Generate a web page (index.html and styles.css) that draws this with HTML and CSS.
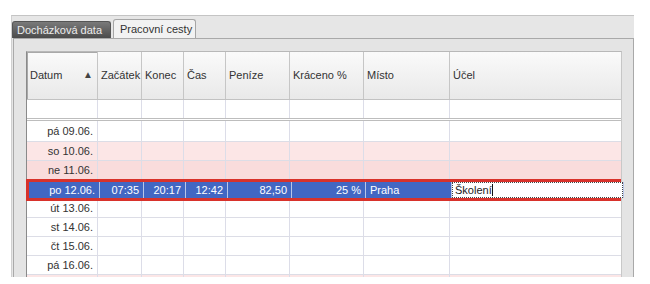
FILE: index.html
```html
<!DOCTYPE html>
<html lang="cs">
<head>
    <meta charset="UTF-8">
    <title>Pracovní cesty</title>
    <link rel="stylesheet" href="styles.css">
</head>
<body>

    <div class="window">
        <!-- Tabs -->
        <div class="tabs">
            <div class="tab">Docházková data</div>
            <div class="tab active">Pracovní cesty</div>
        </div>

        <!-- Panel with grid -->
        <div class="panel">
            <div class="grid">
                <div class="row head">
                    <div class="cell">Datum <span class="sort">▲</span></div>
                    <div class="cell">Začátek</div>
                    <div class="cell">Konec</div>
                    <div class="cell">Čas</div>
                    <div class="cell">Peníze</div>
                    <div class="cell">Kráceno %</div>
                    <div class="cell">Místo</div>
                    <div class="cell">Účel</div>
                </div>
                <div class="row filter">
                    <div class="cell"></div><div class="cell"></div><div class="cell"></div><div class="cell"></div>
                    <div class="cell"></div><div class="cell"></div><div class="cell"></div><div class="cell"></div>
                </div>

                <div class="rows">
                    <div class="row first">
                        <div class="cell num">pá 09.06.</div><div class="cell"></div><div class="cell"></div><div class="cell"></div>
                        <div class="cell"></div><div class="cell"></div><div class="cell"></div><div class="cell"></div>
                    </div>
                    <div class="row sat">
                        <div class="cell num">so 10.06.</div><div class="cell"></div><div class="cell"></div><div class="cell"></div>
                        <div class="cell"></div><div class="cell"></div><div class="cell"></div><div class="cell"></div>
                    </div>
                    <div class="row sun">
                        <div class="cell num">ne 11.06.</div><div class="cell"></div><div class="cell"></div><div class="cell"></div>
                        <div class="cell"></div><div class="cell"></div><div class="cell"></div><div class="cell"></div>
                    </div>
                    <div class="row selected">
                        <div class="cell num">po 12.06.</div>
                        <div class="cell num">07:35</div>
                        <div class="cell num">20:17</div>
                        <div class="cell num">12:42</div>
                        <div class="cell num">82,50</div>
                        <div class="cell num">25 %</div>
                        <div class="cell">Praha</div>
                        <div class="cell edit"><span class="input">Školení<i class="caret"></i></span></div>
                    </div>
                    <div class="row">
                        <div class="cell num">út 13.06.</div><div class="cell"></div><div class="cell"></div><div class="cell"></div>
                        <div class="cell"></div><div class="cell"></div><div class="cell"></div><div class="cell"></div>
                    </div>
                    <div class="row">
                        <div class="cell num">st 14.06.</div><div class="cell"></div><div class="cell"></div><div class="cell"></div>
                        <div class="cell"></div><div class="cell"></div><div class="cell"></div><div class="cell"></div>
                    </div>
                    <div class="row">
                        <div class="cell num">čt 15.06.</div><div class="cell"></div><div class="cell"></div><div class="cell"></div>
                        <div class="cell"></div><div class="cell"></div><div class="cell"></div><div class="cell"></div>
                    </div>
                    <div class="row">
                        <div class="cell num">pá 16.06.</div><div class="cell"></div><div class="cell"></div><div class="cell"></div>
                        <div class="cell"></div><div class="cell"></div><div class="cell"></div><div class="cell"></div>
                    </div>
                    <div class="row sat">
                        <div class="cell num"></div><div class="cell"></div><div class="cell"></div><div class="cell"></div>
                        <div class="cell"></div><div class="cell"></div><div class="cell"></div><div class="cell"></div>
                    </div>
                </div>
            </div>
        </div>
    </div>

</body>
</html>
```

FILE: styles.css
```css
* {
    margin: 0;
    padding: 0;
    box-sizing: border-box;
}

body {
    background: #fff;
    font-family: 'Liberation Sans', Arial, sans-serif;
    font-size: 11px;
    color: #333;
    overflow: hidden;
    height: 284px;
}

.window {
    margin: 15px 0 0 11px;
    width: 623px;
    height: 262px;
    background: #e6e6e6;
    border-top: 1px solid #c4c4c4;
    border-left: 1px solid #d0d0d0;
    display: flex;
    flex-direction: column;
}

/* Tabs */
.tabs {
    display: flex;
    align-items: flex-end;
    gap: 2px;
    height: 22px;
}

.tab {
    height: 17px;
    width: 99px;
    padding-left: 4px;
    line-height: 16px;
    font-size: 11px;
    white-space: nowrap;
    color: #ededed;
    background: linear-gradient(#7a7a7a, #4b4b4b);
    border: 1px solid #555;
    border-bottom: none;
    border-radius: 3px 3px 0 0;
}

.tab.active {
    height: 20px;
    width: 83px;
    padding-left: 6px;
    line-height: 19px;
    color: #333;
    background: #f2f2f2;
    border-color: #a6a6a6;
    margin-bottom: -1px;
}

.panel {
    flex: 1;
    background: #e4e4e4;
    border: 1px solid #a9a9a9;
    border-bottom: none;
    margin-left: 1px;
    padding: 12px 12px 0 12px;
    overflow: hidden;
}

/* Grid */
.grid {
    width: 596px;
    background: #fff;
    border-left: 1px solid #8a8a8a;
    border-top: 1px solid #b8b8b8;
    border-right: 1px solid #c8c8c8;
}

.row {
    display: grid;
    grid-template-columns: 71px 44px 42px 42px 64px 74px 86px 172px;
    height: 19px;
    border-bottom: 1px solid #dcdde6;
}

.cell {
    border-right: 1px solid #dcdde8;
    padding: 0 4px;
    line-height: 18px;
    white-space: nowrap;
    overflow: hidden;
}

.cell:last-child {
    border-right: none;
}

.num {
    text-align: right;
}

.head {
    height: 48px;
    background: linear-gradient(#fafafa, #e9e9e9);
    border-bottom: 1px solid #c2c2c2;
}

.head .cell {
    border-right: 1px solid #c6c6c6;
    line-height: 46px;
    padding: 0 3px;
    display: flex;
    justify-content: space-between;
}

.head .cell:first-child {
    box-shadow: inset 1px 1px 0 #a8a8a8;
}

.sort {
    font-size: 10px;
    color: #444;
    margin-right: 1px;
}

.filter {
    height: 21px;
    border-bottom: 3px double #bdbdbd;
}

.row.first {
    height: 21px;
}

.row.first .cell {
    line-height: 20px;
}

.sat {
    background: #fce6e6;
}

.sun {
    background: #f9dcdc;
}

.selected {
    position: relative;
    z-index: 1;
    height: 22px;
    margin: -1px 0 -2px -1px;
    background: #4267c3;
    color: #fff;
    border: 3px solid #d8322b;
}

.selected .cell {
    border-right: 1px solid #b8c6e8;
    line-height: 16px;
}

.selected .cell.edit {
    padding: 0;
}

.input {
    display: block;
    height: 16px;
    background: #fff;
    color: #222;
    border: 1px dotted #444;
    padding: 0 2px;
    line-height: 14px;
}

.caret {
    display: inline-block;
    width: 1px;
    height: 12px;
    background: #111;
    vertical-align: -2px;
}
```
